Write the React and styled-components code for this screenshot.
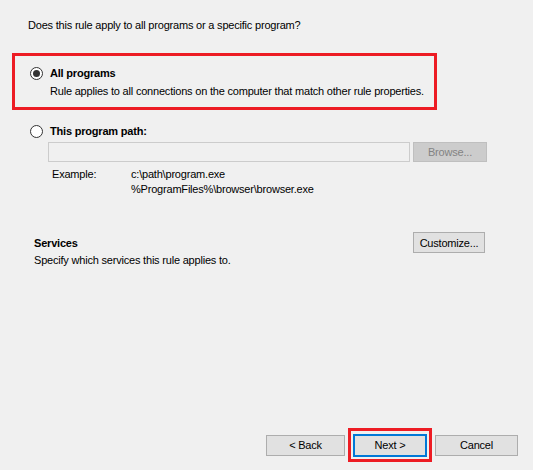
import React from "react";
import styled, { createGlobalStyle } from "styled-components";

const Global = createGlobalStyle`
  html, body { margin: 0; padding: 0; background: #f0f0f0; }
  body { font-family: "Liberation Sans", Arial, sans-serif; font-size: 11px; color: #000; letter-spacing: -0.2px; }
`;

const Page = styled.div`
  width: 533px;
  height: 470px;
  box-sizing: border-box;
  display: flex;
  flex-direction: column;
  background: #f0f0f0;
  overflow: hidden;
  white-space: nowrap;
`;

const Question = styled.div`
  margin: 18px 0 0 28px;
  line-height: 14px;
`;

const Highlight = styled.div`
  margin: 21px 0 0 12px;
  width: 425px;
  height: 57px;
  box-sizing: border-box;
  border: 3px solid #ed1c24;
  padding: 10px 0 0 15px;
`;

const OptionRow = styled.div`
  display: flex;
  align-items: center;
  gap: 7px;
  line-height: 14px;
  margin: ${(p) => p.$mt || 0}px 0 0 ${(p) => p.$ml || 0}px;
`;

const Radio = styled.span`
  width: 13px;
  height: 13px;
  box-sizing: border-box;
  border-radius: 50%;
  border: 1px solid #333;
  background: #fff;
  display: flex;
  align-items: center;
  justify-content: center;
  flex: none;
  &::after {
    content: "";
    width: 7px;
    height: 7px;
    border-radius: 50%;
    background: ${(p) => (p.$checked ? "#333" : "transparent")};
  }
`;

const Bold = styled.span`
  font-weight: bold;
`;

const Desc = styled.div`
  margin: ${(p) => p.$mt || 0}px 0 0 ${(p) => p.$ml || 0}px;
  line-height: 14px;
`;

const PathRow = styled.div`
  display: flex;
  gap: 3px;
  margin: 4px 0 0 48px;
`;

const PathInput = styled.div`
  width: 362px;
  height: 20px;
  box-sizing: border-box;
  border: 1px solid #cccccc;
  background: #f0f0f0;
`;

const Button = styled.button`
  width: ${(p) => p.$w}px;
  height: ${(p) => p.$h || 21}px;
  box-sizing: border-box;
  padding: 0;
  margin: 0;
  font-family: "Liberation Sans", Arial, sans-serif;
  font-size: 11px;
  letter-spacing: -0.2px;
  color: ${(p) => (p.disabled ? "#838383" : "#000")};
  background: ${(p) => (p.disabled ? "#cccccc" : "#e1e1e1")};
  border: ${(p) => (p.$focused ? "2px solid #0078d7" : p.disabled ? "1px solid #bfbfbf" : "1px solid #adadad")};
  display: flex;
  align-items: center;
  justify-content: center;
  flex: none;
`;

const Example = styled.div`
  display: grid;
  grid-template-columns: 79px auto;
  margin: 5px 0 0 52px;
  line-height: 15px;
`;

const ServicesRow = styled.div`
  display: flex;
  align-items: flex-start;
  margin: 35px 48px 0 34px;
`;

const ServicesText = styled.div`
  padding-top: 4px;
  line-height: 14px;
  flex: 1;
`;

const Footer = styled.div`
  margin-top: auto;
  display: flex;
  justify-content: flex-end;
  align-items: center;
  gap: 3px;
  padding: 0 15px 8px 0;
`;

const RedFrame = styled.div`
  width: 84px;
  height: 34px;
  box-sizing: border-box;
  border: 3px solid #ed1c24;
  display: flex;
  align-items: center;
  justify-content: center;
`;

export default function App() {
  return (
    <Page>
      <Global />
      <Question>Does this rule apply to all programs or a specific program?</Question>
      <Highlight>
        <OptionRow>
          <Radio $checked />
          <Bold>All programs</Bold>
        </OptionRow>
        <Desc $mt={4} $ml={20}>
          Rule applies to all connections on the computer that match other rule properties.
        </Desc>
      </Highlight>
      <OptionRow $mt={14} $ml={30}>
        <Radio />
        <Bold>This program path:</Bold>
      </OptionRow>
      <PathRow>
        <PathInput />
        <Button $w={74} $h={20} disabled>
          Browse...
        </Button>
      </PathRow>
      <Example>
        <span>Example:</span>
        <span>c:\path\program.exe</span>
        <span />
        <span>%ProgramFiles%\browser\browser.exe</span>
      </Example>
      <ServicesRow>
        <ServicesText>
          <Bold>Services</Bold>
          <Desc $mt={3}>Specify which services this rule applies to.</Desc>
        </ServicesText>
        <Button $w={72}>Customize...</Button>
      </ServicesRow>
      <Footer>
        <Button $w={79}>&lt; Back</Button>
        <RedFrame>
          <Button $w={74} $h={23} $focused>
            Next &gt;
          </Button>
        </RedFrame>
        <Button $w={83}>Cancel</Button>
      </Footer>
    </Page>
  );
}
